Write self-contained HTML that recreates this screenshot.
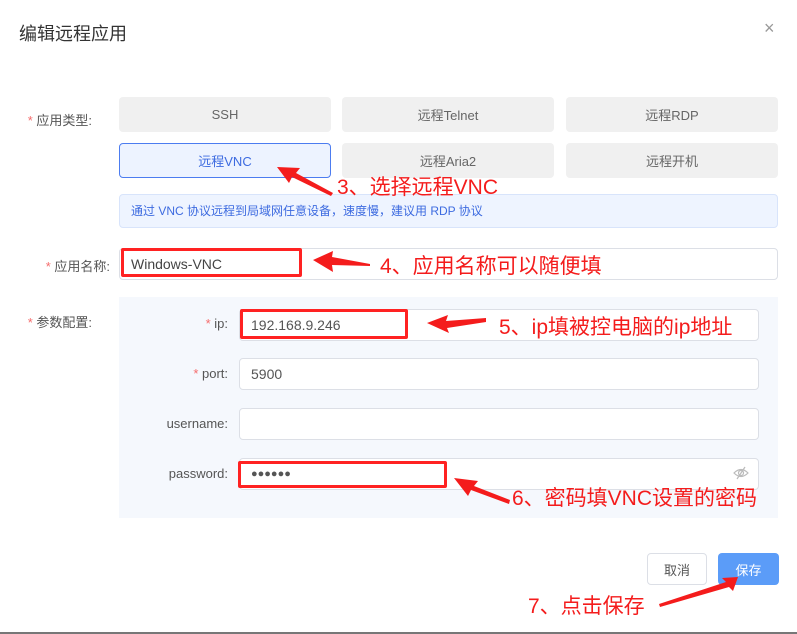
<!DOCTYPE html>
<html><head><meta charset="utf-8"><style>
*{margin:0;padding:0;box-sizing:border-box}
body{width:797px;height:634px;background:#fff;position:relative;overflow:hidden;font-family:"Liberation Sans","Noto Sans CJK SC",sans-serif;color:#333}
.a{position:absolute}
.tb{position:absolute;width:212px;height:35px;background:#f0f0f0;border-radius:4px;font-size:13px;color:#666;display:flex;align-items:center;justify-content:center}
.lbl{position:absolute;font-size:13px;color:#555;text-align:right}
.st{color:#f56c6c}
.inp{position:absolute;background:#fff;border:1px solid #dcdfe6;border-radius:4px;font-size:14px;color:#555;padding-left:11px;display:flex;align-items:center}
.red{position:absolute;border:3px solid #f22;border-radius:2px}
.ann{position:absolute;color:#f41c1c;font-size:21px;white-space:nowrap;font-family:"Liberation Sans","Noto Sans CJK SC",sans-serif}
</style></head><body>
<div class="a" style="left:19px;top:20px;font-size:18px;color:#333">编辑远程应用</div>
<div class="a" style="left:764px;top:18px;font-size:18px;color:#999">×</div>

<div class="lbl" style="left:0;width:92px;top:110px"><span class="st">* </span>应用类型:</div>
<div class="tb" style="left:119px;top:97px">SSH</div>
<div class="tb" style="left:342px;top:97px">远程Telnet</div>
<div class="tb" style="left:566px;top:97px">远程RDP</div>
<div class="tb" style="left:119px;top:143px;background:#edf3ff;border:1px solid #4c7cf0;color:#3d6be0">远程VNC</div>
<div class="tb" style="left:342px;top:143px">远程Aria2</div>
<div class="tb" style="left:566px;top:143px">远程开机</div>
<div class="a" style="left:119px;top:194px;width:659px;height:34px;background:#eef4ff;border:1px solid #d8e4fb;border-radius:4px;font-size:12px;color:#3d6be0;padding-left:11px;line-height:32px">通过 VNC 协议远程到局域网任意设备，速度慢，建议用 RDP 协议</div>

<div class="lbl" style="left:0;width:110px;top:256px"><span class="st">* </span>应用名称:</div>
<div class="inp" style="left:119px;top:248px;width:659px;height:32px;color:#444">Windows-VNC</div>
<div class="red" style="left:121px;top:248px;width:181px;height:29px"></div>

<div class="lbl" style="left:0;width:92px;top:312px"><span class="st">* </span>参数配置:</div>
<div class="a" style="left:119px;top:297px;width:659px;height:221px;background:#f5f8fd"></div>
<div class="lbl" style="left:120px;width:108px;top:316px"><span class="st">* </span>ip:</div>
<div class="lbl" style="left:120px;width:108px;top:366px"><span class="st">* </span>port:</div>
<div class="lbl" style="left:120px;width:108px;top:416px">username:</div>
<div class="lbl" style="left:120px;width:108px;top:466px">password:</div>
<div class="inp" style="left:239px;top:309px;width:520px;height:32px">192.168.9.246</div>
<div class="inp" style="left:239px;top:358px;width:520px;height:32px">5900</div>
<div class="inp" style="left:239px;top:408px;width:520px;height:32px"></div>
<div class="inp" style="left:239px;top:458px;width:520px;height:32px;font-size:11px;letter-spacing:0">●●●●●●</div>
<svg class="a" style="left:733px;top:466px" width="16" height="14" viewBox="0 0 16 14"><path d="M1 7Q8 0 15 7Q8 14 1 7Z" fill="none" stroke="#bbb" stroke-width="1.2"/><circle cx="8" cy="7" r="2.5" fill="none" stroke="#bbb" stroke-width="1.2"/><path d="M12 1L4 13" stroke="#bbb" stroke-width="1.2"/></svg>
<div class="red" style="left:240px;top:309px;width:168px;height:30px"></div>
<div class="red" style="left:238px;top:461px;width:209px;height:27px"></div>

<div class="a" style="left:647px;top:553px;width:60px;height:32px;border:1px solid #dcdfe6;border-radius:4px;font-size:13px;color:#555;display:flex;align-items:center;justify-content:center">取消</div>
<div class="a" style="left:718px;top:553px;width:61px;height:32px;background:#5b9cf8;border-radius:4px;font-size:13px;color:#fff;display:flex;align-items:center;justify-content:center">保存</div>

<div class="ann" style="left:337px;top:171px">3、选择远程VNC</div>
<div class="ann" style="left:380px;top:250px">4、应用名称可以随便填</div>
<div class="ann" style="left:499px;top:311px">5、ip填被控电脑的ip地址</div>
<div class="ann" style="left:512px;top:482px">6、密码填VNC设置的密码</div>
<div class="ann" style="left:528px;top:590px">7、点击保存</div>

<svg class="a" style="left:0;top:0" width="797" height="634">
<g fill="#f41c1c">
<polygon points="277,167 300,168 296,173 333,193 331,196 292,177 289,183"/>
<polygon points="313,260 333,251 332,257 370,264 370,266 332,265 333,272"/>
<polygon points="427,323 448,315 446,321 486,318 486,322 447,328 449,333"/>
<polygon points="454,478 478,481 474,486 510,500 509,504 471,490 468,496"/>
<polygon points="738,577 733,591 729,587 660,607 659,604 726,582 722,578"/>
</g>
<rect x="0" y="632" width="797" height="2" fill="#777"/>
</svg>
</body></html>
